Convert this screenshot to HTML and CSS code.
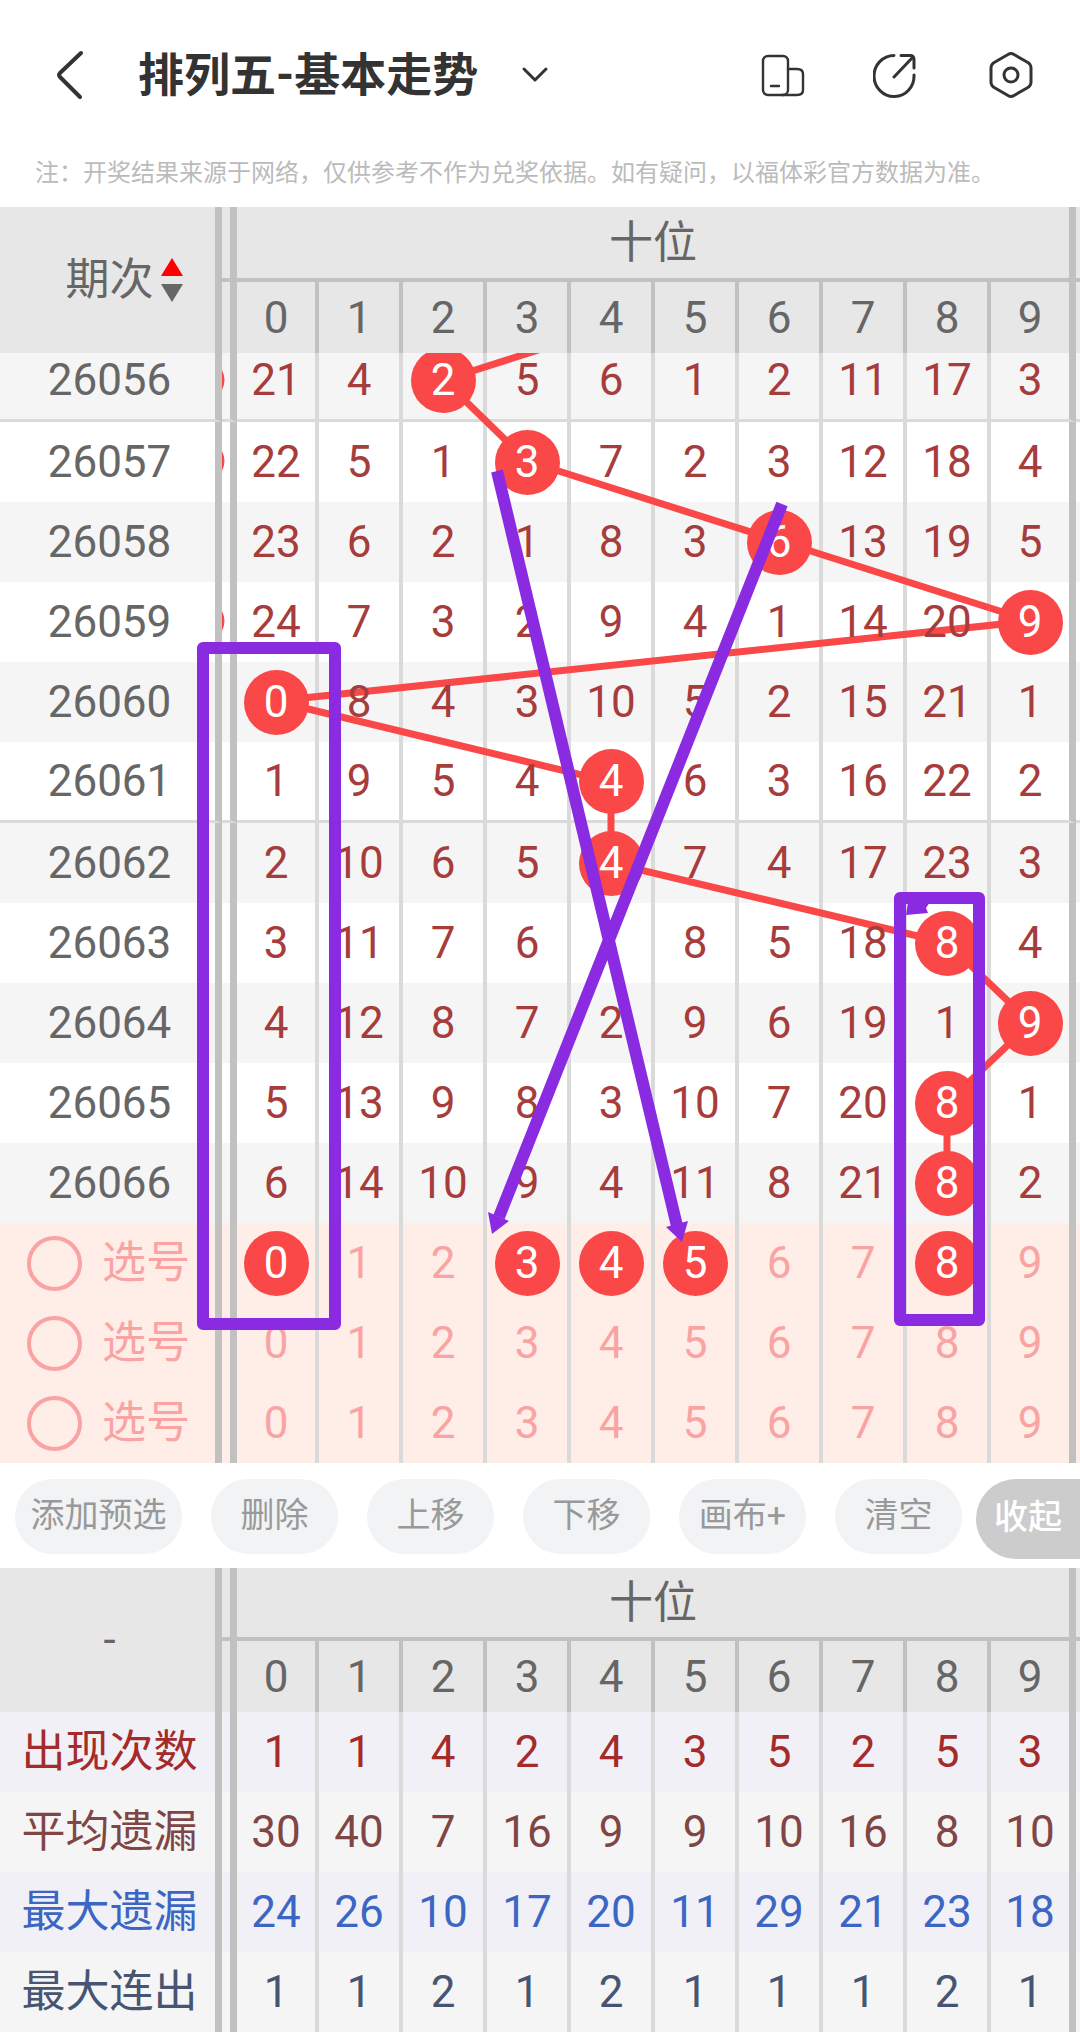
FILE: index.html
```
<!DOCTYPE html>
<html lang="zh-CN">
<head>
  <meta charset="UTF-8">
  <meta name="viewport" content="width=device-width, initial-scale=1">
  <title>排列五-基本走势</title>
  <link rel="stylesheet" href="styles.css">
</head>
<body>
  <header class="topbar">
    <button class="icon-btn back" aria-label="返回">
      <svg width="30" height="50" viewBox="0 0 30 50"><path d="M25 3 4 23q-2 2 0 4l20 20"/></svg>
    </button>
    <h1>排列五-基本走势</h1>
    <button class="icon-btn more" aria-label="切换走势">
      <svg width="30" height="18" viewBox="0 0 30 18"><path d="m4 3 11 11L26 3"/></svg>
    </button>
    <div class="actions">
      <button class="icon-btn" aria-label="横屏">
        <svg width="48" height="50" viewBox="0 0 48 50"><g stroke-width="2.400"><rect x="4" y="6" width="25" height="39" rx="5"/><path d="M29 19h9q6 0 6 5v16q0 5-6 5H23M12 36h8"/></g></svg>
      </button>
      <button class="icon-btn" aria-label="分享">
        <svg width="48" height="50" viewBox="0 0 48 50"><path d="M21 5.500A20 20.500 0 1 0 41 25M28 5.500h9q4 0 4 4V18M40 7 21 27"/></svg>
      </button>
      <button class="icon-btn" aria-label="设置">
        <svg width="48" height="50" viewBox="0 0 48 50"><path d="M21 4.500q3-2 6 0l13 7.500q4 2 4 6v14q0 4-4 6l-13 7.500q-3 2-6 0L8 38q-4-2-4-6V18q0-4 4-6z"/><circle cx="24" cy="25" r="7"/></svg>
      </button>
    </div>
  </header>
  <p class="notice">注：开奖结果来源于网络，仅供参考不作为兑奖依据。如有疑问，以福体彩官方数据为准。</p>

  <table class="chart chart-head">
    <colgroup><col class="c-label"><col class="c-gap"><col class="c-first"><col span="8"><col class="c-last"><col class="c-edge"></colgroup>
    <thead>
      <tr class="group">
        <th rowspan="2"><button class="sort">期次<svg width="22" height="44" viewBox="0 0 22 44"><path fill="#f00" d="M11 0 22 18H0z"/><path fill="#666" d="M0 26h22L11 44z"/></svg></button></th>
        <th></th><th colspan="10">十位</th><th></th>
      </tr>
      <tr class="digits"><th></th><th>0</th><th>1</th><th>2</th><th>3</th><th>4</th><th>5</th><th>6</th><th>7</th><th>8</th><th>9</th><th></th></tr>
    </thead>
  </table>

  <div class="chart-body">
    <table class="chart">
      <colgroup><col class="c-label"><col class="c-gap"><col class="c-first"><col span="8"><col class="c-last"><col class="c-edge"></colgroup>
      <tbody id="trend"></tbody>
      <tbody id="picks"></tbody>
    </table>
    <!-- viewBox y starts at the bottom of the table head -->
    <svg class="lines" viewBox="0 353 1080 1110" preserveAspectRatio="none">
      <polyline points="695,300 444,380 527,461 779,541 1031,621 275,701 611,782 611,863 947,943 1031,1023 947,1103 947,1183"/>
      <path d="M222 370q5 10 0 20zM222 451q5 10 0 20zM222 611q5 10 0 20z"/>
    </svg>
    <svg class="marks" viewBox="0 353 1080 1110" preserveAspectRatio="none">
      <rect x="203" y="648" width="132" height="676"/>
      <rect x="900" y="898" width="79" height="422"/>
      <path d="M497 471 677 1226M782 504 499 1217"/>
      <path class="tip" d="m682 1242-16-15 22-6zM492 1234l-4-22 21 9zM906 915l2-13h22l-4 6 2 5z"/>
    </svg>
  </div>

  <nav class="toolbar">
    <button class="wide">添加预选</button>
    <button>删除</button>
    <button>上移</button>
    <button>下移</button>
    <button>画布+</button>
    <button>清空</button>
    <button class="fold">收起</button>
  </nav>

  <table class="chart stats">
    <colgroup><col class="c-label"><col class="c-gap"><col class="c-first"><col span="8"><col class="c-last"><col class="c-edge"></colgroup>
    <thead>
      <tr class="group"><th rowspan="2">-</th><th></th><th colspan="10">十位</th><th></th></tr>
      <tr class="digits"><th></th><th>0</th><th>1</th><th>2</th><th>3</th><th>4</th><th>5</th><th>6</th><th>7</th><th>8</th><th>9</th><th></th></tr>
    </thead>
    <tbody id="stats"></tbody>
  </table>

  <script>
    // [期号, 遗漏值, 开奖号码]
    const trend = [
      ["26056", [21, 4, 2, 5, 6, 1, 2, 11, 17, 3], 2],
      ["26057", [22, 5, 1, 3, 7, 2, 3, 12, 18, 4], 3],
      ["26058", [23, 6, 2, 1, 8, 3, 6, 13, 19, 5], 6],
      ["26059", [24, 7, 3, 2, 9, 4, 1, 14, 20, 9], 9],
      ["26060", [0, 8, 4, 3, 10, 5, 2, 15, 21, 1], 0],
      ["26061", [1, 9, 5, 4, 4, 6, 3, 16, 22, 2], 4],
      ["26062", [2, 10, 6, 5, 4, 7, 4, 17, 23, 3], 4],
      ["26063", [3, 11, 7, 6, 1, 8, 5, 18, 8, 4], 8],
      ["26064", [4, 12, 8, 7, 2, 9, 6, 19, 1, 9], 9],
      ["26065", [5, 13, 9, 8, 3, 10, 7, 20, 8, 1], 8],
      ["26066", [6, 14, 10, 9, 4, 11, 8, 21, 8, 2], 8]
    ];
    const picks = [[0, 3, 4, 5, 8], [], []];
    const stats = [
      ["出现次数", [1, 1, 4, 2, 4, 3, 5, 2, 5, 3]],
      ["平均遗漏", [30, 40, 7, 16, 9, 9, 10, 16, 8, 10]],
      ["最大遗漏", [24, 26, 10, 17, 20, 11, 29, 21, 23, 18]],
      ["最大连出", [1, 1, 2, 1, 2, 1, 1, 1, 2, 1]]
    ];

    function row(label, cells, cls) {
      return `<tr class="${cls}"><th>${label}</th><td></td>${cells.map(c => `<td>${c}</td>`).join("")}<td></td></tr>`;
    }

    // 每五期一条分隔线
    document.getElementById("trend").innerHTML = trend.map(([no, values, hit], i) =>
      row(no, values.map((v, n) => `<span class="${n === hit ? "ball" : "num"}">${v}</span>`), i % 5 === 0 && i < 10 ? "line" : "")
    ).join("");
    document.getElementById("picks").innerHTML = picks.map(chosen =>
      row(`<label><input type="radio" name="pick">选号</label>`,
        [0, 1, 2, 3, 4, 5, 6, 7, 8, 9].map(n => `<button class="${chosen.includes(n) ? "ball" : "num"}">${n}</button>`), "")
    ).join("");
    document.getElementById("stats").innerHTML = stats.map(([name, values], i) => row(name, values, "s" + i)).join("");
  </script>
</body>
</html>
```
FILE: styles.css
```
* {
  box-sizing: border-box;
}
body {
  margin: 0;
  background: #fff;
  color: #666;
  font-family: Roboto, "Noto Sans CJK SC", sans-serif;
}
button {
  padding: 0;
  border: none;
  background: none;
  color: inherit;
  font: inherit;
  cursor: pointer;
}
.topbar {
  display: flex;
  align-items: center;
  height: 150px;
  padding: 0 45px 0 56px;
}
.topbar h1 {
  margin: 0 0 0 52px;
  color: #333;
  font-size: 46px;
  line-height: 60px;
  font-weight: 700;
}
.icon-btn {
  display: flex;
}
.icon-btn svg {
  fill: none;
  stroke: #333;
  stroke-width: 3;
  stroke-linecap: round;
  stroke-linejoin: round;
}
.icon-btn.back svg {
  stroke-width: 4;
}
.more {
  margin-left: 42px;
}
.actions {
  display: flex;
  gap: 66px;
  margin-left: auto;
}
.notice {
  margin: 0;
  padding: 5px 35px 16px;
  color: #bbb;
  font-size: 24px;
  line-height: 36px;
}

.chart {
  width: 100%;
  table-layout: fixed;
  border-collapse: separate;
  border-spacing: 0;
  font-size: 44px;
  line-height: 60px;
  text-align: center;
}
.c-label { width: 222px; }
.c-gap { width: 15px; }
.c-first { width: 82px; }
.c-last { width: 85px; }
.c-edge { width: 4px; }
.chart th,
.chart td {
  height: 80px;
  padding: 0;
  border: 0 solid #dadada;
  border-right-width: 4px;
  font-weight: 400;
}
.chart th:first-child {
  padding-left: 4px;
}
.chart tr > :first-child,
.chart tr > :nth-child(2),
.chart tr > :nth-last-child(2) {
  border-right: 7px solid #c1c1c1;
}
.chart tr > :last-child {
  border-right: none;
}
.chart thead {
  background: #e7e7e7;
}
.chart thead th {
  height: 71px;
  border-color: #c1c1c1;
}
.chart .digits > :first-child {
  padding-left: 0;
}
.chart .digits > :nth-child(2) {
  border-right: 4px solid #c1c1c1;
}
.chart .group > :not(:first-child) {
  height: 73px;
  border-bottom: 4px solid #c1c1c1;
}
.chart-head .group > :not(:first-child) {
  height: 75px;
}
.sort {
  display: inline-flex;
  align-items: center;
  gap: 7px;
  padding-left: 29px;
}

.chart-body {
  position: relative;
  overflow: hidden;
}
/* the first row is scrolled part way under the head */
.chart-body .chart {
  margin-top: -12px;
}
#trend td {
  color: #a63c3c;
}
#trend tr:nth-child(odd) {
  background: #f5f5f5;
}
#trend .line > * {
  height: 81px;
  border-bottom: 3px solid #dadada;
}
.num,
.ball {
  position: relative;
  z-index: 1;
  display: block;
  width: 65px;
  height: 65px;
  margin: 0 auto;
  line-height: 65px;
}
.ball {
  border-radius: 50%;
  background: #fa4848;
  color: #fff;
}
#picks {
  background: #ffede7;
  color: #f9a3a3;
}
#picks label {
  display: flex;
  align-items: center;
  gap: 20px;
  padding-left: 23px;
}
#picks input {
  appearance: none;
  width: 55px;
  height: 55px;
  margin: 0;
  border: 4px solid #f9a3a3;
  border-radius: 50%;
}
.lines,
.marks {
  position: absolute;
  top: 0;
  left: 0;
  width: 100%;
  height: 100%;
  fill: none;
  pointer-events: none;
}
.lines polyline {
  stroke: #fa4848;
  stroke-width: 7;
}
.lines path {
  fill: #fa4848;
}
.marks {
  z-index: 2;
  stroke: #8a2be2;
  stroke-width: 12;
  stroke-linejoin: round;
}
.marks .tip {
  fill: #8a2be2;
  stroke: none;
}

.toolbar {
  display: flex;
  align-items: flex-start;
  gap: 29px;
  height: 105px;
  padding: 16px 0 0 15px;
  overflow: hidden;
  color: #999;
  font-size: 34px;
  line-height: 50px;
}
.toolbar button {
  flex: 0 0 127px;
  height: 75px;
  padding-bottom: 4px;
  border-radius: 38px;
  background: #f1f3f5;
  white-space: nowrap;
}
.toolbar .wide {
  flex-basis: 167px;
}
.toolbar .fold {
  flex: 1 0 104px;
  height: 80px;
  margin-left: -15px;
  border-radius: 40px 0 0 40px;
  background: #ccc;
  color: #fff;
  font-weight: 500;
}

.stats tbody tr {
  background: #f5f5f5;
}
.stats tbody tr:nth-child(odd) {
  background: #f1f0f6;
}
.s0 { color: #a52a2a; }
.s1 { color: #804545; }
.s2 { color: #3b66c4; }
.s3 { color: #475472; }
```
